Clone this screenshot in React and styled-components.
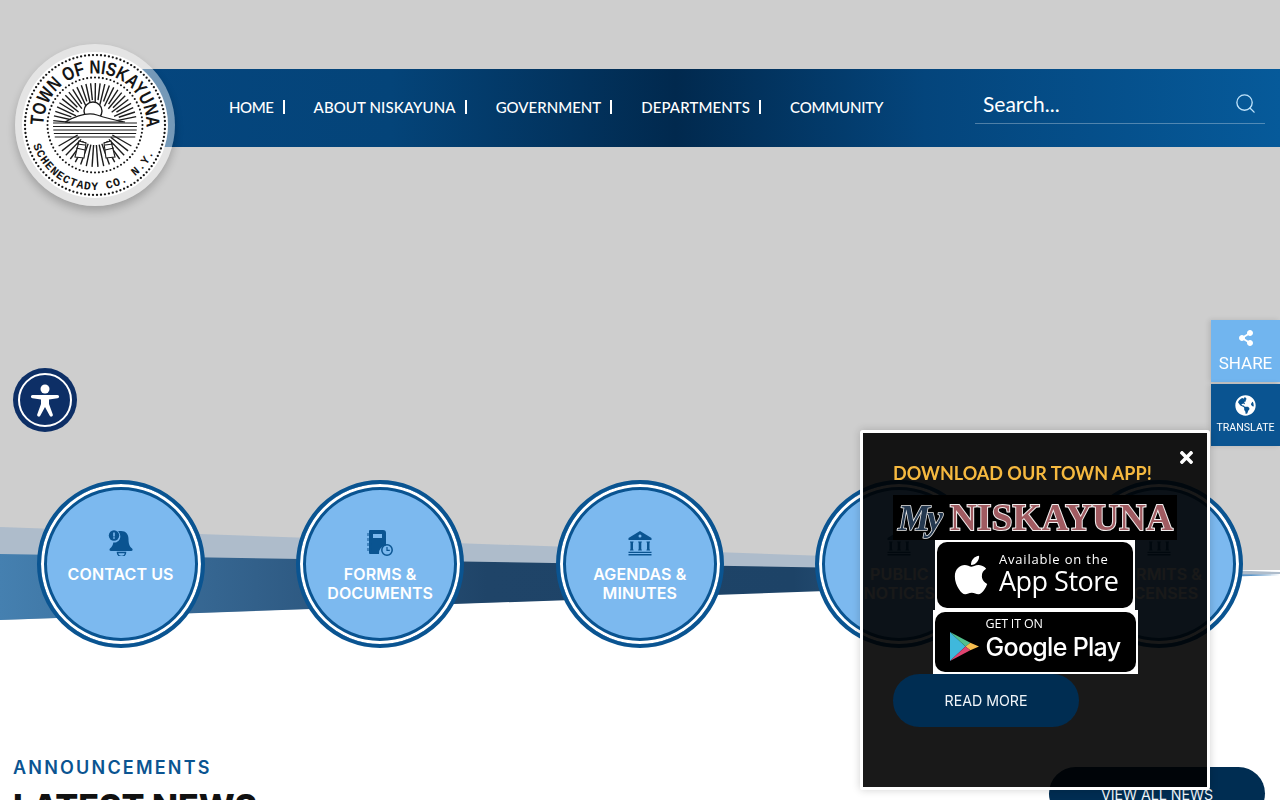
import React from "react";
import styled, { createGlobalStyle } from "styled-components";
import { Search } from "lucide-react";
import { FaShareAlt, FaGlobeAmericas, FaApple, FaTimes } from "react-icons/fa";

const GlobalStyle = createGlobalStyle`
  html, body { margin: 0; padding: 0; background: #fff; }
  body { font-family: "Inter", sans-serif; }
  #root { height: 800px; overflow: hidden; position: relative; }
`;

const Banner = styled.section`
  position: relative;
  height: 648px;
  padding-top: 69px;
  box-sizing: border-box;
  background: linear-gradient(#cecece 570px, #fff 570px);
`;
const Wave = styled.svg`
  position: absolute;
  left: 0;
  top: 520px;
`;
const Header = styled.header`
  position: relative;
  height: 78px;
  margin-left: 95px;
  display: flex;
  align-items: center;
  justify-content: space-between;
  padding: 0 15px 0 134px;
  background: linear-gradient(90deg, #05467f 0%, #044479 25%, #01294e 49%, #04457c 70%, #065a9a 100%);
`;
const LogoDisc = styled.div`
  position: absolute;
  left: -80px;
  top: -25px;
  width: 160px;
  height: 162px;
  border-radius: 50%;
  display: flex;
  align-items: center;
  justify-content: center;
  background: rgba(255, 255, 255, 0.45);
  box-shadow: 0 5px 9px rgba(0, 0, 0, 0.22);
`;
const Nav = styled.nav`
  display: flex;
  align-items: center;
  padding-bottom: 2px;
  font-family: "Lato", sans-serif;
  font-size: 15px;
  font-weight: 500;
  color: #fff;
`;
const NavLink = styled.a`
  letter-spacing: ${(p) => p.$track || "0"};
  white-space: nowrap;
`;
const NavBar = styled.span`
  width: 2px;
  height: 14px;
  background: #fff;
  margin: 0 29px 0 9px;
`;
const SearchBox = styled.div`
  width: 290px;
  height: 39px;
  margin-top: -8px;
  box-sizing: border-box;
  display: flex;
  align-items: center;
  justify-content: space-between;
  padding: 0 8px;
  border-bottom: 1px solid rgba(255, 255, 255, 0.3);
  color: #fff;
  font-family: "Lato", sans-serif;
  font-size: 21px;
  svg { color: #bfe3fb; }
`;
const CircleRow = styled.div`
  position: relative;
  display: flex;
  justify-content: space-between;
  padding: 0 37px 0 36.6px;
  margin-top: 333px;
`;
const Circle = styled.a`
  width: 168px;
  height: 168px;
  box-sizing: border-box;
  border-radius: 50%;
  border: 4px solid #0a5491;
  box-shadow: inset 0 0 0 3px #fff, inset 0 0 0 6px #0a5491;
  background: #7cb9ef;
  display: flex;
  flex-direction: column;
  align-items: center;
  padding-top: 46px;
  color: #fff;
  text-align: center;
  font-size: 16px;
  font-weight: 600;
  line-height: 19px;
  letter-spacing: 0.1px;
  svg { color: #0a5491; margin-bottom: 9px; }
`;
const News = styled.section`
  display: flex;
  justify-content: space-between;
  padding: 110px 15px 0 13px;
`;
const Eyebrow = styled.div`
  color: #0a5491;
  font-size: 18px;
  font-weight: 600;
  letter-spacing: 2.2px;
  line-height: 20px;
`;
const Heading = styled.h2`
  margin: 6px 0 0;
  font-size: 34px;
  font-weight: 800;
  line-height: 46px;
  color: #111;
`;
const Pill = styled.a`
  display: flex;
  align-items: center;
  justify-content: center;
  height: 53px;
  width: ${(p) => p.$w};
  border-radius: 27px;
  background: #002d52;
  color: #f0f5f9;
  font-size: 14.2px;
`;
const ViewAll = styled(Pill)`
  margin-top: 9px;
  align-items: flex-start;
  padding-top: 19px;
  box-sizing: border-box;
`;
const SideTabs = styled.div`
  position: fixed;
  right: 0;
  top: 320px;
  width: 69px;
  display: flex;
  flex-direction: column;
  gap: 2px;
  font-family: "Roboto", sans-serif;
  color: #fff;
  text-align: center;
`;
const SideTab = styled.a`
  height: 62px;
  box-sizing: border-box;
  display: flex;
  flex-direction: column;
  align-items: center;
  padding-top: ${(p) => p.$pad};
  background: ${(p) => p.$bg};
  font-size: ${(p) => p.$size};
  box-shadow: -2px 0 5px rgba(0, 0, 0, 0.12);
`;
const TabLabel = styled.span`
  margin-top: ${(p) => p.$gap};
  line-height: 16px;
`;
const A11yButton = styled.button`
  position: fixed;
  left: 13px;
  top: 368px;
  width: 64px;
  height: 64px;
  padding: 0;
  border: 0;
  border-radius: 50%;
  background: #0d2f66;
  display: flex;
  align-items: center;
  justify-content: center;
`;
const A11yRing = styled.span`
  width: 50px;
  height: 50px;
  border: 2px solid #fff;
  border-radius: 50%;
  display: flex;
  align-items: center;
  justify-content: center;
`;
const Popup = styled.aside`
  position: fixed;
  left: 860px;
  top: 430px;
  width: 350px;
  height: 360px;
  box-sizing: border-box;
  border: 3px solid #fff;
  border-radius: 3px;
  background: rgba(0, 0, 0, 0.9);
  box-shadow: 0 0 8px rgba(0, 0, 0, 0.18);
  padding: 28px 30px 0;
  display: flex;
  flex-direction: column;
  align-items: center;
`;
const CloseButton = styled.span`
  position: absolute;
  right: 11px;
  top: 15px;
  color: #fff;
  font-size: 19px;
  line-height: 19px;
`;
const PopupTitle = styled.h3`
  align-self: flex-start;
  margin: 0;
  font-family: "Lato", sans-serif;
  font-size: 18px;
  font-weight: 700;
  line-height: 24px;
  color: #f6b93f;
  white-space: nowrap;
`;
const AppLogo = styled.div`
  width: 284px;
  height: 45px;
  margin-top: 10px;
  flex: none;
  background: #000;
  display: flex;
  align-items: center;
  padding-left: 5px;
  box-sizing: border-box;
  overflow: hidden;
`;
const LogoScript = styled.span`
  font-family: "Liberation Serif", serif;
  font-style: italic;
  font-weight: 700;
  font-size: 36px;
  line-height: 40px;
  width: 52px;
  flex: none;
  letter-spacing: -3px;
  color: #24384f;
  -webkit-text-stroke: 1.5px #e8e8e8;
  paint-order: stroke fill;
`;
const LogoName = styled.span`
  font-family: "Liberation Serif", serif;
  font-weight: 700;
  font-size: 37px;
  line-height: 40px;
  letter-spacing: 0.3px;
  color: #a05b61;
  -webkit-text-stroke: 2px #f1eded;
  paint-order: stroke fill;
`;
const Badge = styled.a`
  flex: none;
  box-sizing: border-box;
  width: ${(p) => p.$w};
  height: ${(p) => p.$h};
  padding: 2px;
  background: #fff;
`;
const BadgeInner = styled.div`
  height: 100%;
  border-radius: 10px;
  background: #000;
  color: #fff;
  display: flex;
  align-items: center;
  gap: ${(p) => p.$gap};
  padding-left: ${(p) => p.$pad};
`;
const BadgeText = styled.div`
  display: flex;
  flex-direction: column;
  white-space: nowrap;
  padding-bottom: 6px;
`;
const BadgeSmall = styled.span`
  font-family: "Open Sans", sans-serif;
  font-size: ${(p) => p.$size};
  line-height: ${(p) => p.$lh};
  letter-spacing: ${(p) => p.$track};
`;
const BadgeBig = styled.span`
  font-family: ${(p) => p.$font};
  font-weight: 500;
  font-size: ${(p) => p.$size};
  line-height: ${(p) => p.$lh};
  letter-spacing: ${(p) => p.$track};
`;
const PlayMark = styled.svg`
  margin-top: 8px;
  flex: none;
`;
const ReadMore = styled(Pill)`
  align-self: flex-start;
  flex: none;
`;

const DOT_RINGS = [[70, 110, 1.15], [47.5, 76, 1.05]];
const CX = 80;
const CY = 80;
const polar = (r, deg) => {
  const a = (deg * Math.PI) / 180;
  return [CX + r * Math.cos(a), CY + r * Math.sin(a)];
};

const Seal = () => {
  const rays = [];
  for (let d = 186; d <= 354; d += 6.5) {
    const [x1, y1] = polar(d % 13 < 6.5 ? 25 : 21, d);
    const [x2, y2] = polar(42, d);
    rays.push(<line key={d} x1={x1} y1={y1} x2={x2} y2={y2} />);
  }
  const fields = [];
  for (let y = 78; y <= 92; y += 3.5) {
    const half = Math.sqrt(42 * 42 - (y - CY) * (y - CY));
    fields.push(<line key={y} x1={CX - half} y1={y} x2={CX + half} y2={y} />);
  }
  const road = [];
  for (let d = 30; d <= 150; d += 8) {
    const [x1, y1] = polar(20, d);
    const [x2, y2] = polar(42, d);
    road.push(<line key={d} x1={x1} y1={y1} x2={x2} y2={y2} />);
  }
  const [bx1, by1] = polar(65, 162);
  const [bx2, by2] = polar(65, 24);
  return (
    <svg width="146" height="146" viewBox="7 7 146 146">
      <circle cx={CX} cy={CY} r="73" fill="#fff" />
      {DOT_RINGS.map(([r, n, s]) =>
        Array.from({ length: n }, (_, i) => {
          const [x, y] = polar(r, (i * 360) / n);
          return <circle key={`${r}-${i}`} cx={x} cy={y} r={s} fill="#151515" />;
        })
      )}
      <g stroke="#1b1b1b" strokeWidth="1.4" fill="none">
        {rays}
        <g strokeWidth="1.2">{fields}</g>
        {road}
        <circle cx={CX - 2} cy={CY - 14} r="9" fill="#fff" strokeWidth="1.4" />
        <path d="M50 77q20-11 32-7t28 7z" fill="#fff" strokeWidth="1.2" />
        <path d="M60 112l4-16 7 2-2 15zM100 112l-4-16-7 2 2 15z" fill="#fff" strokeWidth="1.1" />
        <path d="M61 103l9 2M99 103l-9 2M62 99l8 1M98 99l-8 1" strokeWidth="1.1" />
      </g>
      <defs>
        <path id="seal-top" d={`M${CX - 51.5} ${CY}A51.500 51.500 0 1 1 ${CX + 51.5} ${CY}`} />
        <path id="seal-bottom" d={`M${bx1} ${by1}A65 65 0 0 0 ${bx2} ${by2}`} />
      </defs>
      <text fontFamily="Liberation Sans, sans-serif" fontWeight="700" fontSize="19" fill="#151515">
        <textPath href="#seal-top" textLength="164" lengthAdjust="spacingAndGlyphs">TOWN OF NISKAYUNA</textPath>
      </text>
      <text fontFamily="Liberation Mono, monospace" fontWeight="700" fontSize="11.5" fill="#151515">
        <textPath href="#seal-bottom" textLength="155">SCHENECTADY CO. N.Y.</textPath>
      </text>
    </svg>
  );
};

const BellIcon = () => (
  <svg width="26" height="26" viewBox="0 0 26 26" fill="currentColor">
    <path d="M13 1c5 0 7.500 3.500 7.500 8 0 5 1.200 7.500 3.600 9.500 1 1 .5 2.500-1 2.500H3c-1.500 0-2-1.500-1-2.500 2-1.700 3-3.500 3.300-6 3.500.5 7-2 7-6 0-2.200-1-4-2.300-5.200C11 1.200 12 1 13 1z" />
    <path d="M9.500 22.500h8a4 4 0 0 1-8 0z" fill="none" stroke="currentColor" strokeWidth="1.500" />
    <circle cx="6" cy="5.500" r="5.200" />
    <path d="M5.200 2.500h1.600v4H5.200zM5.200 7.300h1.600v1.500H5.200z" fill="#7cb9ef" />
  </svg>
);

const NotebookIcon = () => (
  <svg width="26" height="26" viewBox="0 0 26 26" fill="currentColor">
    <path d="M3 0h13a3 3 0 0 1 3 3v12.500a7.500 7.500 0 0 0-7 8.500H3a1 1 0 0 1-1-1V1a1 1 0 0 1 1-1z" />
    <path d="M6 4h9v4H6z" fill="#7cb9ef" />
    <path d="M0 4.500h4M0 9.500h4M0 14.500h4M0 19.500h4" stroke="currentColor" strokeWidth="1.800" strokeLinecap="round" />
    <path d="M0 4.500h2M0 9.500h2M0 14.500h2M0 19.500h2" stroke="#7cb9ef" strokeWidth="0.500" />
    <circle cx="20" cy="20" r="5.200" fill="none" stroke="currentColor" strokeWidth="1.500" />
    <path d="M20 17v3.300h2.800" fill="none" stroke="currentColor" strokeWidth="1.200" />
  </svg>
);

const BankIcon = () => (
  <svg width="26" height="26" viewBox="0 0 26 26" fill="currentColor">
    <path d="M13 1l11.500 7v2h-23V8zM13 4.500a1.500 1.500 0 1 0 0 3 1.500 1.500 0 0 0 0-3z" fillRule="evenodd" />
    <path d="M3 11.500h3.500v1H6v7h.5v1H3v-1h.5v-7H3zM11.200 11.500h3.600v1h-.5v7h.5v1h-3.600v-1h.5v-7h-.5zM19.500 11.500H23v1h-.5v7h.5v1h-3.500v-1h.5v-7h-.5z" />
    <path d="M1.500 21.700h23v1.300h-23zM1.500 24h23v1.500h-23z" />
  </svg>
);

const CIRCLES = [
  { icon: <BellIcon />, label: ["CONTACT US"] },
  { icon: <NotebookIcon />, label: ["FORMS &", "DOCUMENTS"] },
  { icon: <BankIcon />, label: ["AGENDAS &", "MINUTES"] },
  { icon: <BankIcon />, label: ["PUBLIC", "NOTICES"] },
  { icon: <BankIcon />, label: ["PERMITS &", "LICENSES"] },
];

const App = () => {
  return (
    <>
      <GlobalStyle />
      <Banner>
        <Wave width="1280" height="110" viewBox="0 520 1280 110">
          <defs>
            <linearGradient id="band" x1="0" x2="1" y1="0" y2="0">
              <stop offset="0" stopColor="#4580b0" />
              <stop offset="0.2" stopColor="#32608a" />
              <stop offset="0.38" stopColor="#1f4468" />
              <stop offset="0.62" stopColor="#1d4367" />
              <stop offset="1" stopColor="#5f9bcf" />
            </linearGradient>
          </defs>
          <polygon points="0,527 1280,572 1280,574 0,620" fill="#aebccb" />
          <polygon points="0,554 1280,575 0,620" fill="url(#band)" />
        </Wave>
        <Header>
          <LogoDisc>
            <Seal />
          </LogoDisc>
          <Nav>
            <NavLink $track="-0.4px">HOME</NavLink>
            <NavBar />
            <NavLink $track="0.1px">ABOUT NISKAYUNA</NavLink>
            <NavBar />
            <NavLink>GOVERNMENT</NavLink>
            <NavBar />
            <NavLink $track="0.1px">DEPARTMENTS</NavLink>
            <NavBar />
            <NavLink $track="-0.2px">COMMUNITY</NavLink>
          </Nav>
          <SearchBox>
            <span>Search...</span>
            <Search size={23} strokeWidth={1.4} />
          </SearchBox>
        </Header>
        <CircleRow>
          {CIRCLES.map((c) => (
            <Circle key={c.label[0]}>
              {c.icon}
              {c.label.map((line) => (
                <span key={line}>{line}</span>
              ))}
            </Circle>
          ))}
        </CircleRow>
      </Banner>
      <News>
        <div>
          <Eyebrow>ANNOUNCEMENTS</Eyebrow>
          <Heading>LATEST NEWS</Heading>
        </div>
        <ViewAll $w="216px">VIEW ALL NEWS</ViewAll>
      </News>
      <A11yButton aria-label="Accessibility">
        <A11yRing>
          <svg width="30" height="34" viewBox="0 0 30 34" fill="#fff">
            <circle cx="15" cy="6" r="4.500" />
            <path d="M2.500 12h25a1.500 1.500 0 0 1 0 3.200L19 16.500V21l3.800 10.500a1.700 1.700 0 0 1-3.200 1.100L15 24l-4.600 8.600a1.700 1.700 0 0 1-3.200-1.100L11 21v-4.500l-8.500-1.300a1.600 1.600 0 0 1 0-3.200z" />
          </svg>
        </A11yRing>
      </A11yButton>
      <SideTabs>
        <SideTab $bg="#71b5ef" $size="17px" $pad="10px">
          <FaShareAlt size={16} />
          <TabLabel $gap="9px">SHARE</TabLabel>
        </SideTab>
        <SideTab $bg="#0a5491" $size="10.6px" $pad="11px">
          <FaGlobeAmericas size={21} />
          <TabLabel $gap="4px">TRANSLATE</TabLabel>
        </SideTab>
      </SideTabs>
      <Popup>
        <CloseButton>
          <FaTimes />
        </CloseButton>
        <PopupTitle>DOWNLOAD OUR TOWN APP!</PopupTitle>
        <AppLogo>
          <LogoScript>My</LogoScript>
          <LogoName>NISKAYUNA</LogoName>
        </AppLogo>
        <Badge $w="200px" $h="70px">
          <BadgeInner $gap="6.5px" $pad="11.5px">
            <FaApple size={44} />
            <BadgeText>
              <BadgeSmall $size="13px" $lh="18px" $track="0.8px">Available on the</BadgeSmall>
              <BadgeBig $font='"Open Sans", sans-serif' $size="27px" $lh="26px" $track="-0.5px">App Store</BadgeBig>
            </BadgeText>
          </BadgeInner>
        </Badge>
        <Badge $w="205px" $h="64px">
          <BadgeInner $gap="7px" $pad="15px">
            <PlayMark width="29" height="31" viewBox="0 0 30 32">
              <polygon points="0,1 16,16 0,31" fill="#3fb8dc" />
              <polygon points="0,1 21,12 16,16" fill="#52c08d" />
              <polygon points="21,12 30,16 21,20 16,16" fill="#f6bd4e" />
              <polygon points="0,31 16,16 21,20" fill="#df4470" />
            </PlayMark>
            <BadgeText>
              <BadgeSmall $size="12.5px" $lh="16px" $track="-0.2px">GET IT ON</BadgeSmall>
              <BadgeBig $font='"Inter", sans-serif' $size="25px" $lh="30px" $track="-0.7px">Google Play</BadgeBig>
            </BadgeText>
          </BadgeInner>
        </Badge>
        <ReadMore $w="186px">READ MORE</ReadMore>
      </Popup>
    </>
  );
};

export default App;
